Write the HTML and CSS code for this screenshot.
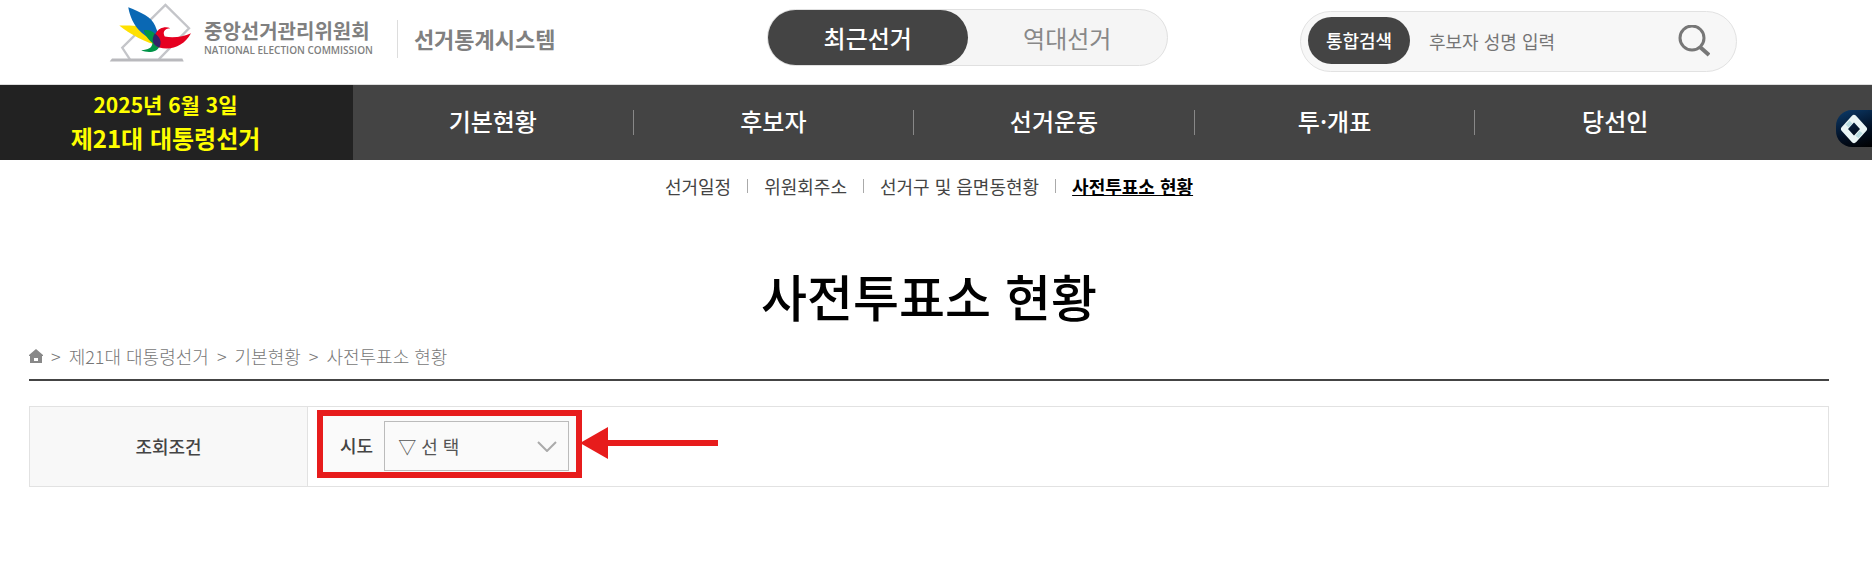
FILE: index.html
```
<!DOCTYPE html>
<html lang="ko">
<head>
  <meta charset="UTF-8" />
  <meta name="viewport" content="width=device-width, initial-scale=1.0"/>
  <title>선거통계시스템</title>
  <link rel="stylesheet" href="styles.css">
</head>
<body>

  <!-- Header -->
  <header class="header">
    <a class="logo" href="#">
      <svg class="emblem" viewBox="55 10 250 176" aria-hidden="true">
        <path d="M118 179L95 144L225 15L296 85L205 179" fill="none" stroke="#c4c5c9" stroke-width="7"/>
        <path d="M64 176H276L280 185H57Z" fill="#b9b9bd"/>
        <path d="M86 77C120 76 160 76 188 94C203 105 207 119 205 135C170 133 117 102 86 77Z" fill="#ffe100"/>
        <path d="M113 22C150 37 184 51 194 78C199 94 207 101 207 127L190 124C158 105 124 83 113 22Z" fill="#0a68b4"/>
        <path d="M160 91C185 88 205 102 206 142C201 157 171 162 152 151C174 151 184 145 186 130C174 119 162 104 160 91Z" fill="#009448"/>
        <path d="M240 85C221 86 216 97 223 110C249 116 279 110 302 100C282 137 243 154 206 143C185 133 184 119 196 100C205 84 224 78 240 85Z" fill="#e60020"/>
        <path d="M193 101C208 110 215 126 207 143C186 137 181 119 193 101Z" fill="#332369"/>
      </svg>
      <span class="logo-name">
        <strong>중앙선거관리위원회</strong>
        <small>NATIONAL ELECTION COMMISSION</small>
      </span>
      <span class="logo-system">선거통계시스템</span>
    </a>

    <div class="toggle">
      <button class="on" type="button">최근선거</button>
      <button type="button">역대선거</button>
    </div>

    <form class="search">
      <label for="keyword">통합검색</label>
      <input id="keyword" type="text" placeholder="후보자 성명 입력">
      <button type="button" aria-label="검색">
        <svg viewBox="0 0 32 32" width="32" height="32">
          <circle cx="14" cy="13" r="12" fill="none" stroke="#777" stroke-width="3"/>
          <path d="M22 22L31 30" stroke="#777" stroke-width="4"/>
        </svg>
      </button>
    </form>
  </header>

  <!-- Main Menu -->
  <nav class="menu">
    <a class="election" href="#">
      <span class="date">2025년 6월 3일</span>
      <span class="title">제21대 대통령선거</span>
    </a>
    <ul>
      <li><a href="#">기본현황</a></li>
      <li><a href="#">후보자</a></li>
      <li><a href="#">선거운동</a></li>
      <li><a href="#">투·개표</a></li>
      <li><a href="#">당선인</a></li>
    </ul>
  </nav>

  <button class="side-tab" type="button" aria-label="열기">
    <svg viewBox="0 0 28 30" width="28" height="30">
      <path d="M14 4L24 15L14 26L4 15Z" fill="none" stroke="#eaf6f7" stroke-width="6" stroke-linejoin="round"/>
      <path d="M7 12L11 8M17 23L21 18" stroke="#b9dce1" stroke-width="4"/>
    </svg>
  </button>

  <!-- Content -->
  <main class="content">
    <ul class="submenu">
      <li><a href="#">선거일정</a></li>
      <li><a href="#">위원회주소</a></li>
      <li><a href="#">선거구 및 읍면동현황</a></li>
      <li><a class="on" href="#">사전투표소 현황</a></li>
    </ul>

    <h1>사전투표소 현황</h1>

    <div class="location">
      <a href="#" aria-label="홈">
        <svg viewBox="0 0 14 14" width="14" height="14">
          <path d="M7 0L14 6V7H13V14H1V7H0V6Z" fill="#888"/>
          <path d="M5 9H9V12H5Z" fill="#fff"/>
        </svg>
      </a>
      <span>&gt;</span>
      <span>제21대 대통령선거</span>
      <span>&gt;</span>
      <span>기본현황</span>
      <span>&gt;</span>
      <span>사전투표소 현황</span>
    </div>

    <div class="condition">
      <div class="condition-title">조회조건</div>
      <div class="condition-body">
        <div class="city">
          <label for="cityCode">시도</label>
          <div class="select-wrap">
            <select id="cityCode">
              <option>▽ 선 택</option>
            </select>
            <svg class="chevron" viewBox="0 0 20 11" width="20" height="11">
              <path d="M1 1L10 10L19 1" fill="none" stroke="#aaa" stroke-width="2"/>
            </svg>
          </div>
        </div>
        <svg class="pointer" viewBox="0 0 138 35" width="138" height="35" aria-hidden="true">
          <path d="M0 16L28 0V13H138V19H28V32Z" fill="#e71c1c"/>
        </svg>
      </div>
    </div>
  </main>

</body>
</html>
```
FILE: styles.css
```
* {
  box-sizing: border-box;
}

body {
  font-family: "Noto Sans CJK KR", sans-serif;
  font-size: 18px;
  line-height: 26px;
  background-color: #fff;
  color: #444;
  margin: 0;
}

a {
  color: inherit;
  text-decoration: none;
}

ul {
  list-style: none;
  margin: 0;
  padding: 0;
}

button, input, select {
  font: inherit;
  border: none;
  padding: 0;
}

button {
  cursor: pointer;
}

/* header */
.header {
  display: grid;
  grid-template-columns: 658fr 533fr 437px;
  align-items: start;
  height: 85px;
  padding: 0 135px 0 109px;
  border-bottom: 1px solid #ddd;
}

.logo {
  display: flex;
  align-items: center;
  padding-top: 3px;
  color: #808080;
  white-space: nowrap;
}

.emblem {
  width: 83px;
  height: 59px;
}

.logo-name {
  display: flex;
  flex-direction: column;
  margin-left: 12px;
  padding: 10px 24px 0 0;
}

.logo-name strong {
  font-size: 20px;
  line-height: 24px;
}

.logo-name small {
  font-family: "Open Sans", sans-serif;
  font-size: 10px;
  font-weight: 600;
  line-height: 14px;
}

.logo-system {
  padding: 5px 0 7px 16px;
  border-left: 1px solid #ddd;
  font-size: 22px;
  font-weight: bold;
  margin-top: 12px;
}

.toggle {
  display: flex;
  width: 401px;
  height: 57px;
  margin-top: 9px;
  border: 1px solid #e0e0e0;
  border-radius: 29px;
  background-color: #f5f5f5;
}

.toggle button {
  flex: 1;
  border-radius: 28px;
  background: none;
  color: #888;
  font-size: 24px;
}

.toggle .on {
  background-color: #444;
  color: #fff;
  font-weight: 500;
}

.search {
  display: flex;
  align-items: center;
  height: 61px;
  margin-top: 11px;
  padding: 0 26px 2px 7px;
  border: 1px solid #e2e2e2;
  border-radius: 31px;
  background-color: #f7f7f7;
}

.search label {
  width: 102px;
  border-radius: 24px;
  background-color: #444;
  color: #fff;
  font-weight: 500;
  line-height: 47px;
  text-align: center;
}

.search input {
  flex: 1;
  min-width: 0;
  margin-left: 19px;
  background: none;
}

.search input::placeholder {
  color: #757575;
}

.search button {
  display: flex;
  background: none;
}

/* main menu */
.menu {
  display: flex;
  height: 75px;
  background-color: #444;
  color: #fff;
}

.election {
  display: flex;
  flex-direction: column;
  justify-content: center;
  width: 353px;
  padding: 0 22px 3px 0;
  background-color: #222;
  color: #ff0;
  font-weight: bold;
  line-height: 33px;
  text-align: center;
}

.election .date {
  font-size: 21px;
}

.election .title {
  font-size: 24px;
}

.menu ul {
  display: flex;
  flex: 1;
  align-items: center;
  padding-right: 117px;
}

.menu li {
  flex: 1;
  height: 25px;
  font-size: 24px;
  font-weight: 500;
  line-height: 22px;
  text-align: center;
}

.menu li + li {
  border-left: 1px solid #888;
}

.side-tab {
  position: fixed;
  top: 110px;
  right: 0;
  display: flex;
  align-items: center;
  width: 36px;
  height: 37px;
  padding-left: 4px;
  border-radius: 16px 0 0 16px;
  background: linear-gradient(160deg, #0c3c6c, #021024 60%, #000);
}

/* content */
.content {
  margin: 0 43px 0 29px;
}

.submenu {
  display: flex;
  justify-content: center;
  align-items: center;
  padding-top: 19px;
  line-height: 14px;
}

.submenu li {
  padding: 0 16px;
}

.submenu li + li {
  border-left: 1px solid #aaa;
}

.submenu .on {
  color: #000;
  font-weight: bold;
  text-decoration: underline;
}

h1 {
  margin: 66px 0 0;
  color: #000;
  font-size: 50px;
  font-weight: 500;
  line-height: 72px;
  text-align: center;
}

.location {
  display: flex;
  align-items: center;
  gap: 8px;
  height: 50px;
  padding-top: 2px;
  border-bottom: 2px solid #444;
  color: #777;
  font-weight: 300;
}

.location a {
  display: flex;
}

.condition {
  display: flex;
  margin-top: 25px;
  border: 1px solid #e2e2e2;
}

.condition-title {
  display: flex;
  align-items: center;
  justify-content: center;
  width: 278px;
  padding-bottom: 2px;
  border-right: 1px solid #e2e2e2;
  background-color: #f8f8f8;
  font-weight: 500;
}

.condition-body {
  display: flex;
  align-items: center;
  padding: 3px 0 8px 9px;
}

.city {
  display: flex;
  align-items: center;
  padding: 5px 7px 1px 17px;
  border: 6px solid #e71c1c;
  background-color: #fafafa;
}

.city label {
  margin-right: 11px;
  padding-bottom: 2px;
  font-weight: 500;
}

.select-wrap {
  position: relative;
}

.city select {
  appearance: none;
  width: 185px;
  height: 50px;
  padding-left: 13px;
  border: 1px solid #bbb;
  border-radius: 0;
  background-color: #fafafa;
  color: #555;
}

.chevron {
  position: absolute;
  top: 20px;
  right: 12px;
  pointer-events: none;
}

.pointer {
  margin-left: -2px;
}
```
